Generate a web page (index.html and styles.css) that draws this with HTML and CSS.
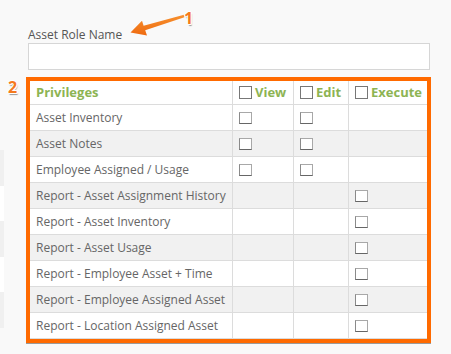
FILE: index.html
```html
<!DOCTYPE html>
<html>
<head>
<meta charset="utf-8">
<link rel="stylesheet" href="styles.css">
</head>
<body>
<div class="page">
  <div class="edge">
    <div class="strip gray"></div>
    <div class="strip white"></div>
    <div class="strip gray"></div>
    <div class="strip white"></div>
    <div class="strip gray"></div>
  </div>
  <div class="main">
    <label class="label">Asset Role Name</label>
    <div class="input"></div>
    <div class="box">
      <div class="grid">
        <div class="cell head">Privileges</div>
        <div class="cell head"><span class="cb hcb"></span>View</div>
        <div class="cell head"><span class="cb hcb"></span>Edit</div>
        <div class="cell head"><span class="cb hcb"></span>Execute</div>

        <div class="cell">Asset Inventory</div>
        <div class="cell cbcell"><span class="cb"></span></div>
        <div class="cell cbcell"><span class="cb"></span></div>
        <div class="cell"></div>

        <div class="cell alt">Asset Notes</div>
        <div class="cell alt cbcell"><span class="cb"></span></div>
        <div class="cell alt cbcell"><span class="cb"></span></div>
        <div class="cell alt"></div>

        <div class="cell">Employee Assigned / Usage</div>
        <div class="cell cbcell"><span class="cb"></span></div>
        <div class="cell cbcell"><span class="cb"></span></div>
        <div class="cell"></div>

        <div class="cell alt">Report - Asset Assignment History</div>
        <div class="cell alt"></div>
        <div class="cell alt"></div>
        <div class="cell alt cbcell"><span class="cb"></span></div>

        <div class="cell">Report - Asset Inventory</div>
        <div class="cell"></div>
        <div class="cell"></div>
        <div class="cell cbcell"><span class="cb"></span></div>

        <div class="cell alt">Report - Asset Usage</div>
        <div class="cell alt"></div>
        <div class="cell alt"></div>
        <div class="cell alt cbcell"><span class="cb"></span></div>

        <div class="cell">Report - Employee Asset + Time</div>
        <div class="cell"></div>
        <div class="cell"></div>
        <div class="cell cbcell"><span class="cb"></span></div>

        <div class="cell alt">Report - Employee Assigned Asset</div>
        <div class="cell alt"></div>
        <div class="cell alt"></div>
        <div class="cell alt cbcell"><span class="cb"></span></div>

        <div class="cell">Report - Location Assigned Asset</div>
        <div class="cell"></div>
        <div class="cell"></div>
        <div class="cell cbcell"><span class="cb"></span></div>
      </div>
    </div>
  </div>
</div>

<svg class="arrow" width="60" height="30" viewBox="128 10 60 30">
  <defs>
    <linearGradient id="ag" x1="0" y1="0" x2="0" y2="1">
      <stop offset="0" stop-color="#f7902e"/>
      <stop offset="1" stop-color="#ee6a10"/>
    </linearGradient>
  </defs>
  <polygon fill="url(#ag)" points="130.5,32.5 142,20.8 143.6,25.8 184,14.8 184.4,17.2 145.2,30.2 147,35.5"/>
</svg>
<span class="num n1">1</span>
<span class="num n2">2</span>
</body>
</html>
```
FILE: styles.css
```css
html, body {
  margin: 0;
  padding: 0;
  background: #f9f9f9;
  font-family: "Open Sans", "DejaVu Sans", sans-serif;
}
.page {
  display: flex;
  width: 451px;
  height: 354px;
  overflow: hidden;
}
.edge {
  width: 4px;
  padding-top: 150px;
  display: flex;
  flex-direction: column;
}
.strip { height: 35.5px; }
.strip.gray { background: #f0f0f0; }
.strip.white { background: #ffffff; }
.main {
  padding-left: 24px;
  padding-top: 27px;
  display: flex;
  flex-direction: column;
}
.label {
  font-size: 12px;
  line-height: 16px;
  color: #555;
}
.input {
  margin-top: 0;
  width: 400px;
  height: 25px;
  background: #fff;
  border: 1px solid #d6d6d6;
}
.box {
  margin-top: 7px;
  margin-left: -2px;
  width: 397px;
  border: 4px solid #ff6a00;
  box-shadow: 0 1px 0 #9a9a9a;
}
.grid {
  display: grid;
  grid-template-columns: 202px 60px 54px 78px;
  grid-auto-rows: 25px;
  grid-template-rows: 23px;
  gap: 1px;
  background: #dcdcdc;
  border-bottom: 1px solid #dcdcdc;
}
.cell {
  background: #fff;
  display: flex;
  align-items: center;
  padding-left: 6px;
  font-size: 12px;
  color: #666;
  white-space: nowrap;
}
.cell.alt { background: #f1f1f1; }
.cell.head {
  font-weight: bold;
  font-size: 13px;
  color: #8db453;
  padding-bottom: 1px;
}
.cb {
  display: inline-block;
  box-sizing: border-box;
  width: 13px;
  height: 12px;
  background: #fff;
  border: 1px solid #a8a8a8;
  border-bottom-color: #666;
  border-left-color: #8a8a8a;
}
.hcb {
  height: 13px;
  border-color: #777;
  margin-right: 3px;
}
.arrow {
  position: absolute;
  left: 128px;
  top: 10px;
}
.num {
  position: absolute;
  font-family: "Open Sans", "DejaVu Sans", sans-serif;
  font-weight: bold;
  font-size: 16px;
  line-height: 16px;
  color: #f47a1e;
  text-shadow: 1px 0 0 #fff, -1px 0 0 #fff, 0 1px 0 #fff, 0 -1px 0 #fff, 1px 1px 0 #fff, 1px 2px 1px #999;
}
.n1 { left: 184px; top: 10px; }
.n2 { left: 8px; top: 79px; }
```
